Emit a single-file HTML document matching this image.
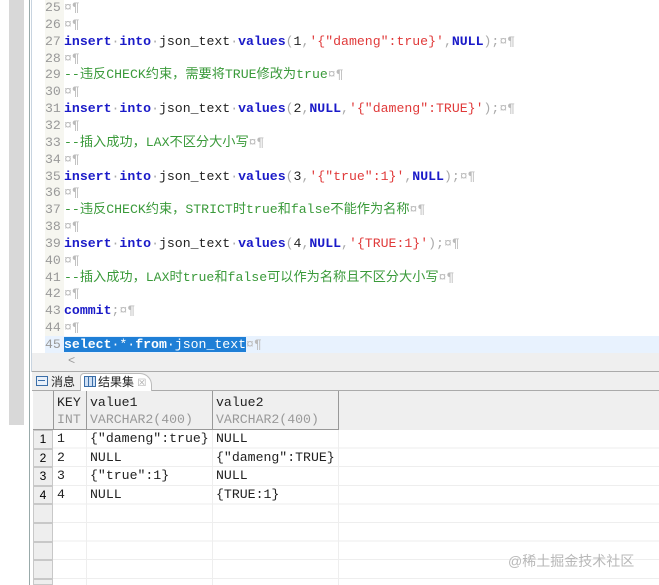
<!DOCTYPE html>
<html><head><meta charset="utf-8"><style>
*{margin:0;padding:0;box-sizing:border-box}
html,body{width:659px;height:585px;overflow:hidden}
body{background:#fff;position:relative;font-family:"Liberation Mono","Noto Sans CJK SC",monospace;font-size:13.2px}
.abs{position:absolute}
.ln{position:absolute;left:45px;height:16.85px;line-height:16.85px;white-space:pre;color:#222}
.n{color:#999;display:inline-block;width:19px}
.k{color:#1a1ac8;font-weight:bold}
.s{color:#e03a3a}
.c{color:#3a9a3a}
.d{color:#bbb}
.p{color:#aaa}
.sel{background:#1f7fd6;color:#fff}
.sel .k{color:#fff}
.cell{position:absolute;white-space:nowrap;line-height:18.6px;color:#222}
.rn{position:absolute;left:33px;width:20px;height:18.6px;background:#eee;border:1px solid #c8c8c8;text-align:center;font-family:"Liberation Sans",sans-serif;font-size:12px;line-height:17px}
</style></head><body>
<div class="abs" style="left:9px;top:0;width:15px;height:425px;background:#d8d8d8"></div>
<div class="abs" style="left:29px;top:0;width:1px;height:585px;background:#9aa"></div>
<div class="abs" style="left:31px;top:0;width:1px;height:372px;background:#c8d4e0"></div>
<div class="abs" style="left:45px;top:0;width:19px;height:353px;background:#f6f6f0"></div>
<div class="abs" style="left:45px;top:336px;width:614px;height:17px;background:#e8f2fe"></div>
<div class="abs" style="left:32px;top:353px;width:627px;height:19px;background:#efefef;border-bottom:1px solid #aaa;color:#999;font-size:12px;padding-left:36px;line-height:17px">&lt;</div>

<div class="ln" style="top:0"><span class="n">25</span><span class="d">¤¶</span></div>
<div class="ln" style="top:16.85px"><span class="n">26</span><span class="d">¤¶</span></div>
<div class="ln" style="top:33.7px"><span class="n">27</span><span class="k">insert</span><span class="p">·</span><span class="k">into</span><span class="p">·</span>json_text<span class="p">·</span><span class="k">values</span><span class="p">(</span>1<span class="p">,</span><span class="s">'{"dameng":true}'</span><span class="p">,</span><span class="k">NULL</span><span class="p">);</span><span class="d">¤¶</span></div>
<div class="ln" style="top:50.55px"><span class="n">28</span><span class="d">¤¶</span></div>
<div class="ln" style="top:67.4px"><span class="n">29</span><span class="c">--违反CHECK约束，需要将TRUE修改为true</span><span class="d">¤¶</span></div>
<div class="ln" style="top:84.25px"><span class="n">30</span><span class="d">¤¶</span></div>
<div class="ln" style="top:101.1px"><span class="n">31</span><span class="k">insert</span><span class="p">·</span><span class="k">into</span><span class="p">·</span>json_text<span class="p">·</span><span class="k">values</span><span class="p">(</span>2<span class="p">,</span><span class="k">NULL</span><span class="p">,</span><span class="s">'{"dameng":TRUE}'</span><span class="p">);</span><span class="d">¤¶</span></div>
<div class="ln" style="top:117.95px"><span class="n">32</span><span class="d">¤¶</span></div>
<div class="ln" style="top:134.8px"><span class="n">33</span><span class="c">--插入成功，LAX不区分大小写</span><span class="d">¤¶</span></div>
<div class="ln" style="top:151.65px"><span class="n">34</span><span class="d">¤¶</span></div>
<div class="ln" style="top:168.5px"><span class="n">35</span><span class="k">insert</span><span class="p">·</span><span class="k">into</span><span class="p">·</span>json_text<span class="p">·</span><span class="k">values</span><span class="p">(</span>3<span class="p">,</span><span class="s">'{"true":1}'</span><span class="p">,</span><span class="k">NULL</span><span class="p">);</span><span class="d">¤¶</span></div>
<div class="ln" style="top:185.35px"><span class="n">36</span><span class="d">¤¶</span></div>
<div class="ln" style="top:202.2px"><span class="n">37</span><span class="c">--违反CHECK约束，STRICT时true和false不能作为名称</span><span class="d">¤¶</span></div>
<div class="ln" style="top:219.05px"><span class="n">38</span><span class="d">¤¶</span></div>
<div class="ln" style="top:235.9px"><span class="n">39</span><span class="k">insert</span><span class="p">·</span><span class="k">into</span><span class="p">·</span>json_text<span class="p">·</span><span class="k">values</span><span class="p">(</span>4<span class="p">,</span><span class="k">NULL</span><span class="p">,</span><span class="s">'{TRUE:1}'</span><span class="p">);</span><span class="d">¤¶</span></div>
<div class="ln" style="top:252.75px"><span class="n">40</span><span class="d">¤¶</span></div>
<div class="ln" style="top:269.6px"><span class="n">41</span><span class="c">--插入成功，LAX时true和false可以作为名称且不区分大小写</span><span class="d">¤¶</span></div>
<div class="ln" style="top:286.45px"><span class="n">42</span><span class="d">¤¶</span></div>
<div class="ln" style="top:303.3px"><span class="n">43</span><span class="k">commit</span><span class="p">;</span><span class="d">¤¶</span></div>
<div class="ln" style="top:320.15px"><span class="n">44</span><span class="d">¤¶</span></div>
<div class="ln" style="top:337px"><span class="n">45</span><span class="sel"><span class="k">select</span>·*·<span class="k">from</span>·json_text</span><span class="d">¤¶</span></div>

<div class="abs" style="left:32px;top:372px;width:627px;height:19px;background:#efefef;border-bottom:1px solid #aaa"></div>
<div class="abs" style="left:80px;top:373px;width:72px;height:18px;background:#fff;border:1px solid #bbb;border-bottom:none;border-radius:4px 12px 0 0"></div>
<div class="abs" style="left:36px;top:376px;width:12px;height:10px;border:1px solid #3a6ea8;background:#e8f0fa"></div>
<div class="abs" style="left:38px;top:380px;width:7px;height:1px;background:#3a6ea8"></div>
<div class="abs" style="left:51px;top:373px;line-height:18px;font-family:'Liberation Sans','Noto Sans CJK SC',sans-serif;font-size:12px;color:#222">消息</div>
<div class="abs" style="left:84px;top:376px;width:12px;height:11px;border:1px solid #3a6ea8;background:repeating-linear-gradient(90deg,#cfe0f5 0 3px,#3a6ea8 3px 4px)"></div>
<div class="abs" style="left:98px;top:373px;line-height:18px;font-family:'Liberation Sans','Noto Sans CJK SC',sans-serif;font-size:12px;color:#222">结果集 <span style="color:#aaa;font-size:10px">☒</span></div>

<div class="abs" style="left:33px;top:391px;width:626px;height:39px;background:#efefef"></div>
<div class="abs" style="left:53px;top:391px;width:1px;height:39px;background:#999"></div>
<div class="abs" style="left:86px;top:391px;width:1px;height:39px;background:#999"></div>
<div class="abs" style="left:212px;top:391px;width:1px;height:39px;background:#999"></div>
<div class="abs" style="left:338px;top:391px;width:1px;height:39px;background:#999"></div>
<div class="abs" style="left:33px;top:429px;width:306px;height:1px;background:#999"></div>
<div class="cell" style="left:57px;top:394px">KEY</div>
<div class="cell" style="left:57px;top:411px;color:#999">INT</div>
<div class="cell" style="left:90px;top:394px">value1</div>
<div class="cell" style="left:90px;top:411px;color:#999">VARCHAR2(400)</div>
<div class="cell" style="left:216px;top:394px">value2</div>
<div class="cell" style="left:216px;top:411px;color:#999">VARCHAR2(400)</div>
<div class="abs" style="left:53px;top:430px;width:606px;height:155px;background:repeating-linear-gradient(180deg,transparent 0 17.6px,#eee 17.6px 18.6px)"></div>
<div class="abs" style="left:86px;top:430px;width:1px;height:155px;background:#eee"></div>
<div class="abs" style="left:212px;top:430px;width:1px;height:155px;background:#eee"></div>
<div class="abs" style="left:338px;top:430px;width:1px;height:155px;background:#eee"></div>
<div class="rn" style="top:430px">1</div>
<div class="rn" style="top:448.6px">2</div>
<div class="rn" style="top:467.2px">3</div>
<div class="rn" style="top:485.8px">4</div>
<div class="rn" style="top:504.4px"></div>
<div class="rn" style="top:523px"></div>
<div class="rn" style="top:541.6px"></div>
<div class="rn" style="top:560.2px"></div>
<div class="rn" style="top:578.8px;height:6.2px"></div>
<div class="cell" style="left:57px;top:430px">1</div><div class="cell" style="left:90px;top:430px">{"dameng":true}</div><div class="cell" style="left:216px;top:430px">NULL</div>
<div class="cell" style="left:57px;top:448.6px">2</div><div class="cell" style="left:90px;top:448.6px">NULL</div><div class="cell" style="left:216px;top:448.6px">{"dameng":TRUE}</div>
<div class="cell" style="left:57px;top:467.2px">3</div><div class="cell" style="left:90px;top:467.2px">{"true":1}</div><div class="cell" style="left:216px;top:467.2px">NULL</div>
<div class="cell" style="left:57px;top:485.8px">4</div><div class="cell" style="left:90px;top:485.8px">NULL</div><div class="cell" style="left:216px;top:485.8px">{TRUE:1}</div>
<div class="abs" style="left:508px;top:551px;font-family:'Liberation Sans','Noto Sans CJK SC',sans-serif;font-size:14px;color:#b8b8b8">@稀土掘金技术社区</div>
</body></html>
